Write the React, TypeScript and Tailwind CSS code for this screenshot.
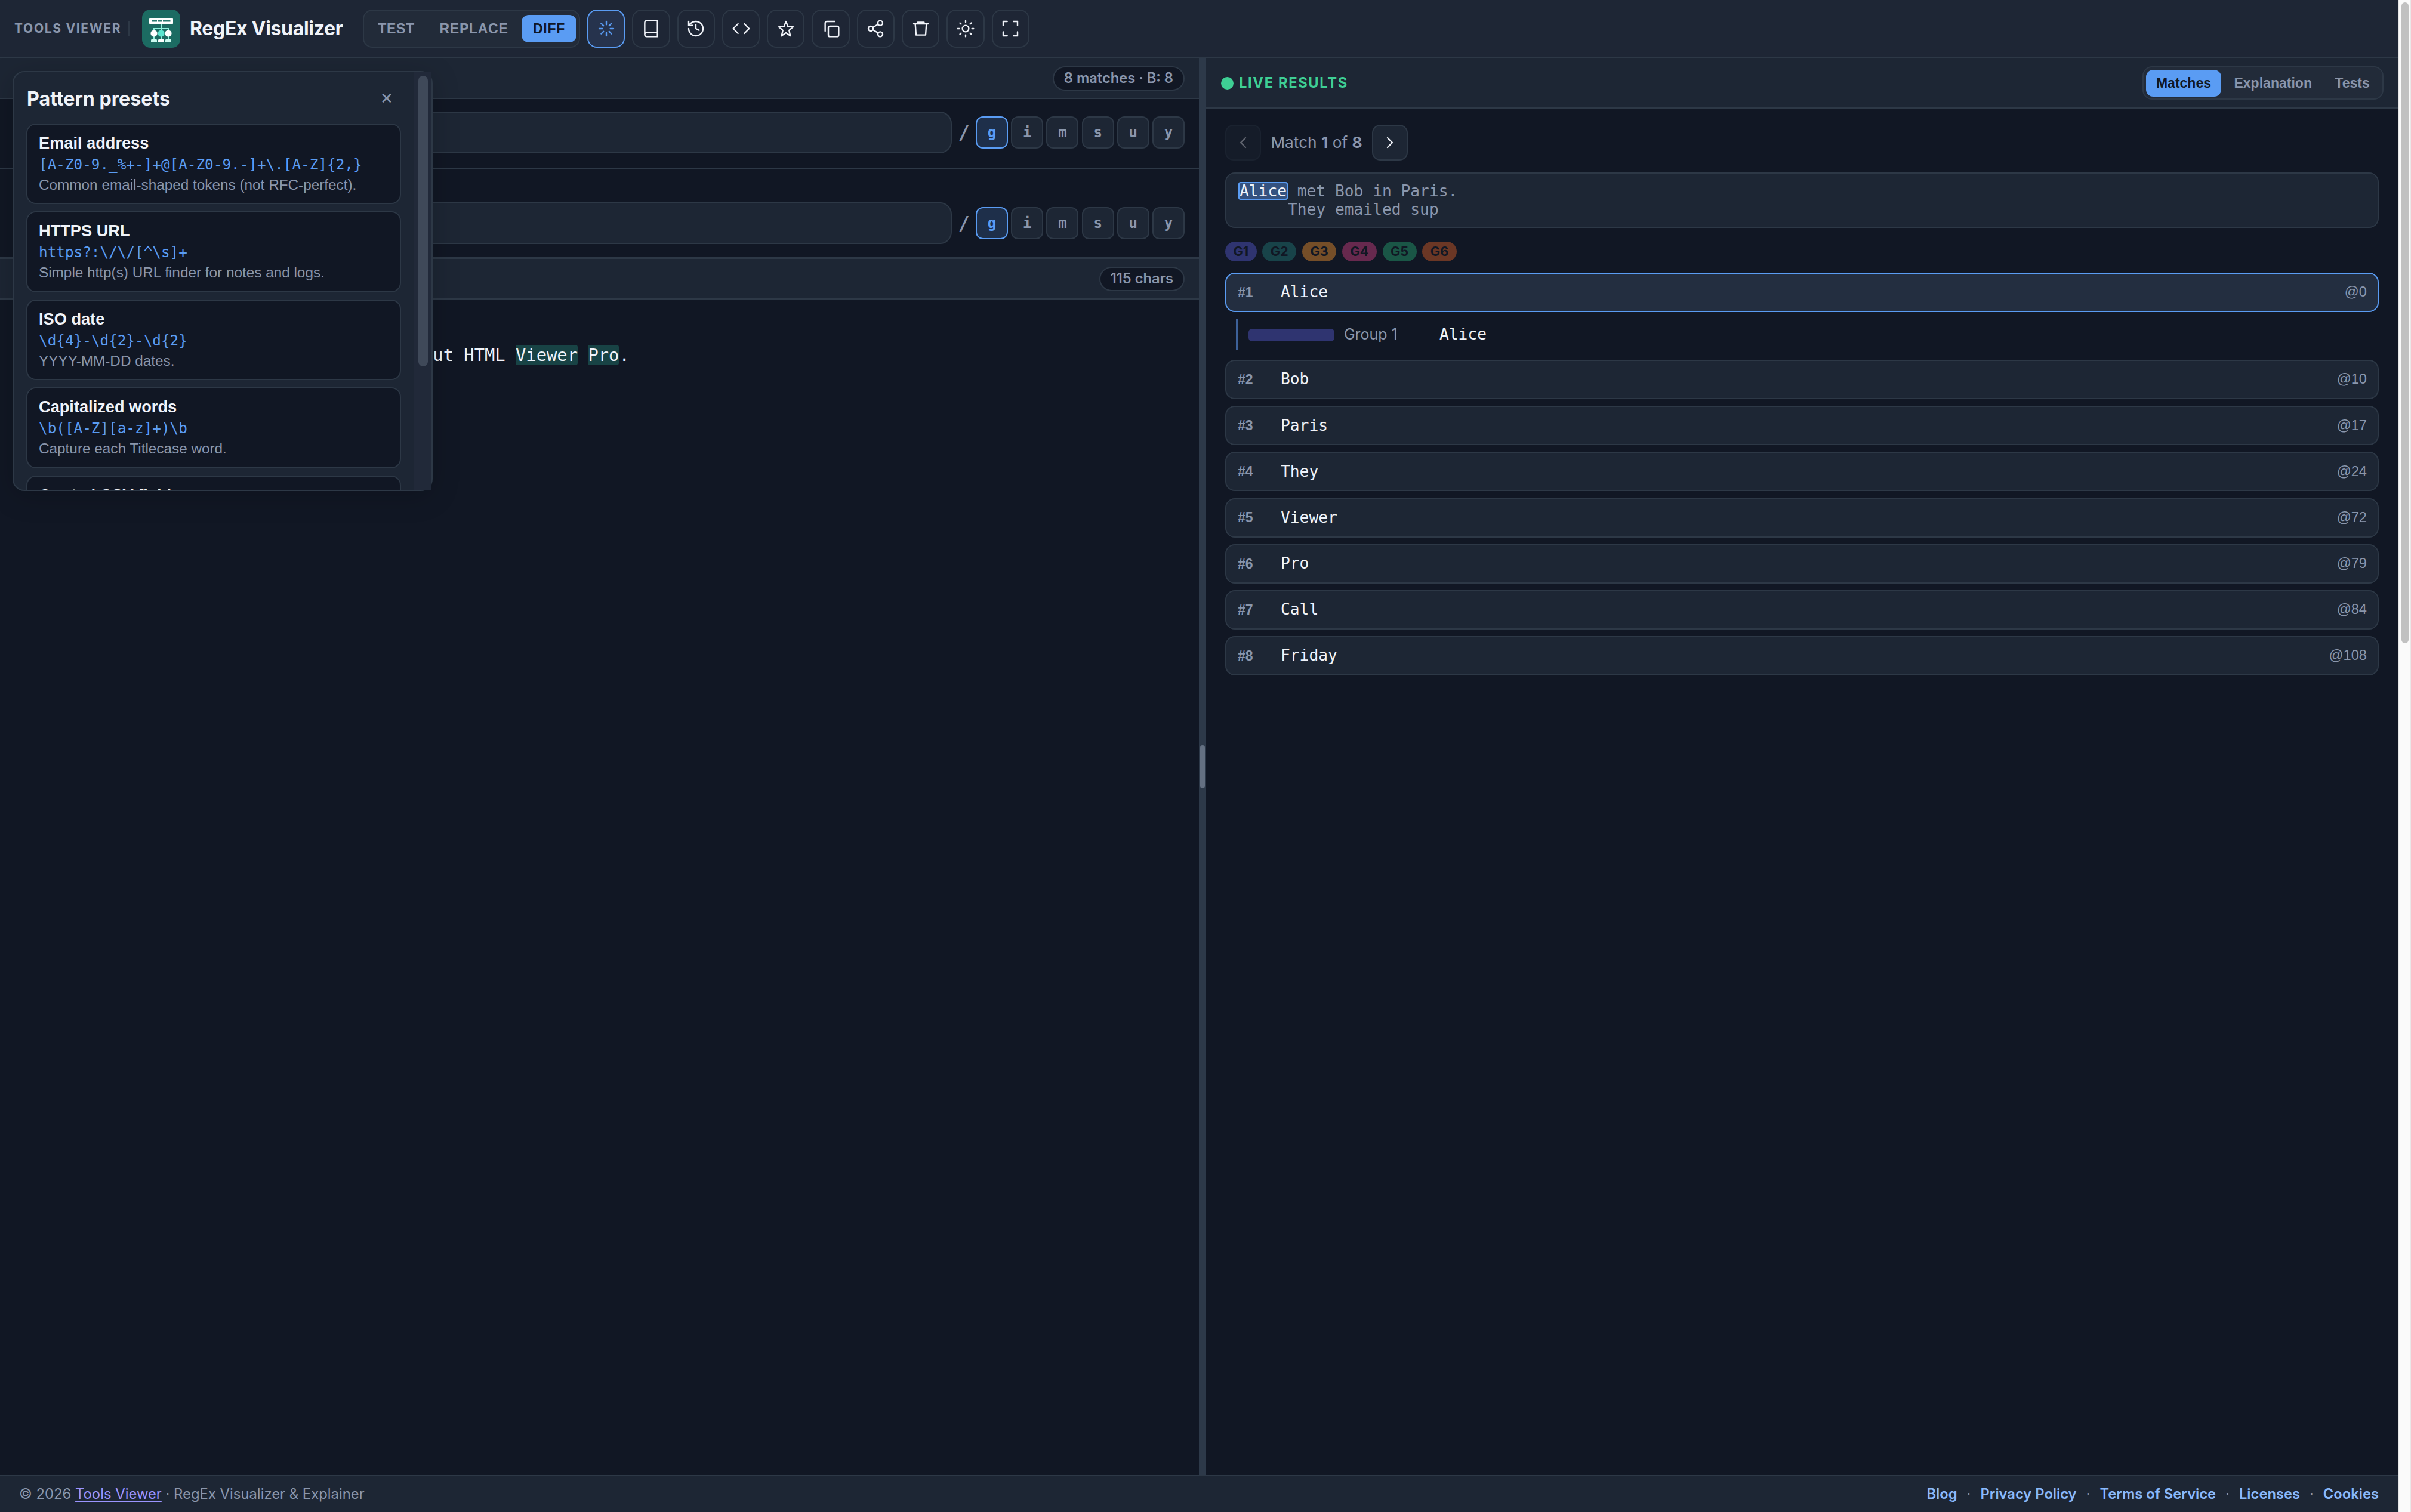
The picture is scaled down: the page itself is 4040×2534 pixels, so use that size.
import { useState } from 'react';
import type { ReactNode } from 'react';

const MODES = [
  ['TEST', 'w-[100px]'],
  ['REPLACE', 'w-[154px]'],
  ['DIFF', 'w-[92px]'],
];

const FLAGS = ['g', 'i', 'm', 's', 'u', 'y'];

const PRESETS = [
  ['Email address', '[A-Z0-9._%+-]+@[A-Z0-9.-]+\\.[A-Z]{2,}', 'Common email-shaped tokens (not RFC-perfect).'],
  ['HTTPS URL', 'https?:\\/\\/[^\\s]+', 'Simple http(s) URL finder for notes and logs.'],
  ['ISO date', '\\d{4}-\\d{2}-\\d{2}', 'YYYY-MM-DD dates.'],
  ['Capitalized words', '\\b([A-Z][a-z]+)\\b', 'Capture each Titlecase word.'],
  ['Quoted CSV field', '', ''],
];

const GROUPS = [
  ['G1', 'bg-[#2f3470]'],
  ['G2', 'bg-[#184349]'],
  ['G3', 'bg-[#754e28]'],
  ['G4', 'bg-[#67294e]'],
  ['G5', 'bg-[#1a5646]'],
  ['G6', 'bg-[#6b3725]'],
];

const MATCHES = [
  { text: 'Alice', at: 0 },
  { text: 'Bob', at: 10 },
  { text: 'Paris', at: 17 },
  { text: 'They', at: 24 },
  { text: 'Viewer', at: 72 },
  { text: 'Pro', at: 79 },
  { text: 'Call', at: 84 },
  { text: 'Friday', at: 108 },
];

const LINKS = ['Blog', 'Privacy Policy', 'Terms of Service', 'Licenses', 'Cookies'];

function Icon({ children }: { children: ReactNode }) {
  return (
    <svg className="w-8 h-8" viewBox="0 0 24 24" fill="none" stroke="currentColor" strokeWidth="1.8" strokeLinecap="round" strokeLinejoin="round">
      {children}
    </svg>
  );
}

const TOOLS: [string, ReactNode][] = [
  ['Presets', <path d="M12 3v4M12 17v4M3 12h4M17 12h4M5.6 5.6l2.8 2.8M15.6 15.6l2.8 2.8M5.6 18.4l2.8-2.8M15.6 8.4l2.8-2.8" />],
  ['Cheatsheet', <path d="M4 19.5A2.5 2.5 0 0 1 6.5 17H20M6.5 2H20v20H6.5A2.5 2.5 0 0 1 4 19.5v-15A2.5 2.5 0 0 1 6.5 2z" />],
  ['History', <path d="M3 12a9 9 0 1 0 9-9 9.75 9.75 0 0 0-6.74 2.74L3 8M3 3v5h5M12 7v5l4 2" />],
  ['Code', <path d="M16 18l6-6-6-6M8 6l-6 6 6 6" />],
  ['Favorites', <path d="M12 3l2.4 6.3 6.5.5-5 4.3 1.6 7L12 17.3l-5.5 3.8 1.6-7-5-4.3 6.5-.5z" />],
  ['Copy', <><rect x="9" y="9" width="13" height="13" rx="2" /><path d="M5 15V5a2 2 0 0 1 2-2h10" /></>],
  ['Share', <><circle cx="18" cy="5" r="3" /><circle cx="6" cy="12" r="3" /><circle cx="18" cy="19" r="3" /><path d="M8.6 13.5l6.8 4M15.4 6.5l-6.8 4" /></>],
  ['Clear', <path d="M3 6h18M19 6l-1 14H6L5 6M8 6V4h8v2" />],
  ['Theme', <><circle cx="12" cy="12" r="4" /><path d="M12 2v2M12 20v2M4.9 4.9l1.4 1.4M17.7 17.7l1.4 1.4M2 12h2M20 12h2M6.3 17.7l-1.4 1.4M19.1 4.9l-1.4 1.4" /></>],
  ['Fullscreen', <path d="M8 3H3v5M16 3h5v5M3 16v5h5M21 16v5h-5" />],
];

function Logo() {
  return (
    <svg className="w-16 h-16 ml-[21px]" viewBox="0 0 64 64">
      <rect width="64" height="64" rx="14" fill="#1c6b62" />
      <rect x="12" y="14" width="40" height="11" rx="2.5" fill="#fff" />
      <path d="M17 19.2h8M27 19.2h6M35 19.2h12.5" stroke="#2a7a70" strokeWidth="2.4" />
      <path d="M32 25v10M20 36v-4h24v4M20 44v7M32 44v7M44 44v7" stroke="#8ff0dc" strokeWidth="2" fill="none" />
      <circle cx="20" cy="40" r="5.6" fill="#fff" />
      <circle cx="32" cy="40" r="5.6" fill="#5ce5cf" />
      <circle cx="44" cy="40" r="5.6" fill="#fff" />
      <rect x="15" y="50" width="10" height="5" rx="1.4" fill="#ccfbf1" />
      <rect x="27" y="50" width="10" height="5" rx="1.4" fill="#fff" />
      <rect x="39" y="50" width="10" height="5" rx="1.4" fill="#ccfbf1" />
    </svg>
  );
}

function Header() {
  const [mode, setMode] = useState('DIFF');
  return (
    <header className="relative z-20 h-[98px] shrink-0 flex items-center pl-6 bg-[#1e2635] border-b-2 border-[#2d3846]">
      <span className="w-[191px] text-[21px] font-bold tracking-[0.08em] text-[#8a96ac] whitespace-nowrap">TOOLS VIEWER</span>
      <span className="w-0.5 h-[26px] bg-[#2d3846]"></span>
      <Logo />
      <h1 className="ml-[16px] w-[290px] text-[32px] font-bold tracking-[-0.01em] text-[#f0f3f9] whitespace-nowrap">RegEx Visualizer</h1>
      <div className="h-16 flex items-center gap-[3px] px-1 bg-[#222b39] border-2 border-[#2d3846] rounded-[16px]">
        {MODES.map(([label, width]) => (
          <button
            key={label}
            onClick={() => setMode(label)}
            className={"h-[46px] font-['Liberation_Sans',sans-serif] text-[23.04px] font-bold tracking-[0.03em] rounded-[12px] " + width + (mode === label ? ' bg-[#5a9cf3] text-[#111724]' : ' text-[#8a96ac]')}
          >
            {label}
          </button>
        ))}
      </div>
      <div className="ml-3 flex gap-3">
        {TOOLS.map(([name, icon], i) => (
          <button
            key={name}
            title={name}
            className={'w-[63.3px] h-16 flex items-center justify-center border-2 rounded-[16px] ' + (i === 0 ? 'bg-[#26334d] border-[#5a9cf3] text-[#5a9cf3]' : 'border-[#2d3846] text-[#f0f3f9]')}
          >
            <Icon>{icon}</Icon>
          </button>
        ))}
      </div>
    </header>
  );
}

function Badge({ children }: { children: ReactNode }) {
  return (
    <span className="h-[41px] flex items-center px-[17px] bg-[#111724] border-2 border-[#2d3846] rounded-full text-[23.68px] font-semibold text-[#8a96ac] whitespace-nowrap">
      {children}
    </span>
  );
}

function PatternRow() {
  return (
    <div className="flex items-center font-['DejaVu_Sans_Mono',monospace]">
      <div className="ml-8 flex-1 h-[70px] bg-[#1d2634] border-2 border-[#2d3846] rounded-[20px]"></div>
      <span className="w-10 text-center text-[32px] leading-[54px] font-bold text-[#8a96ac]">/</span>
      <div className="flex gap-[5.2px]">
        {FLAGS.map((flag) => (
          <button
            key={flag}
            className={'w-[54px] h-[54px] border-2 rounded-[12px] text-[24px] font-bold ' + (flag === 'g' ? 'bg-[#1e2f4a] border-[#5a9cf3] text-[#5a9cf3]' : 'bg-[#1d2634] border-[#2d3846] text-[#8a96ac]')}
          >
            {flag}
          </button>
        ))}
      </div>
    </div>
  );
}

function Hit({ children }: { children: ReactNode }) {
  return <mark className="bg-[#184345] text-[#f0f3f9] rounded-[4px]">{children}</mark>;
}

function Editor() {
  return (
    <section className="w-[2009px] flex flex-col">
      <div className="h-[68px] flex items-center justify-end px-6 bg-[#1d2634] border-b-2 border-[#2d3846]">
        <Badge>8 matches · B: 8</Badge>
      </div>
      <div className="h-[117px] px-6 pt-[21px] border-b-2 border-[#2d3846]">
        <PatternRow />
      </div>
      <div className="h-[151px] px-6 pt-[56px] border-b-4 border-[#2d3846]">
        <PatternRow />
      </div>
      <div className="h-[68px] flex items-center justify-end px-6 bg-[#1d2634] border-b-2 border-[#2d3846]">
        <Badge>115 chars</Badge>
      </div>
      <div className="flex-1 pl-[725.3px] pt-[70px] font-['DejaVu_Sans_Mono',monospace] text-[28.8px] leading-[46px] text-[#f0f3f9] whitespace-pre">
        <div>ut HTML <Hit>Viewer</Hit> <Hit>Pro</Hit>.</div>
      </div>
    </section>
  );
}

function Results() {
  return (
    <section className="flex-1 flex flex-col">
      <div className="h-[84px] flex items-center justify-between px-6 bg-[#1d2634] border-b-2 border-[#2d3846]">
        <div className="ml-px flex items-center gap-[9px] text-[23.68px] font-bold tracking-[0.07em] text-[#3ecf94]">
          <span className="w-[21px] h-[21px] rounded-full bg-[#3ecf94]"></span>
          LIVE RESULTS
        </div>
        <div className="h-14 flex items-center gap-1 px-1 bg-[#222b39] border-2 border-[#2d3846] rounded-[16px] font-['Liberation_Sans',sans-serif] text-[23.04px] font-bold text-[#8a96ac]">
          <button className="h-[45px] px-[17.2px] rounded-[12px] bg-[#5a9cf3] text-[#111724]">Matches</button>
          <button className="h-[45px] px-[17.2px]">Explanation</button>
          <button className="h-[45px] px-[17.2px]">Tests</button>
        </div>
      </div>
      <div className="px-8 pt-[27px]">
        <div className="flex items-center">
          <button className="w-[60px] h-[60px] flex items-center justify-center bg-[#1d2634] border-2 border-[#2d3846] rounded-[14px] text-[#f0f3f9] opacity-35">
            <Icon><path d="M15 6l-6 6 6 6" /></Icon>
          </button>
          <span className="w-[186px] text-center text-[26.24px] text-[#8a96ac]">Match <b>1</b> of <b>8</b></span>
          <button className="w-[60px] h-[60px] flex items-center justify-center bg-[#1d2634] border-2 border-[#2d3846] rounded-[14px] text-[#f0f3f9]">
            <Icon><path d="M9 6l6 6-6 6" /></Icon>
          </button>
        </div>
        <div className="mt-5 h-[93px] px-5 py-3.5 bg-[#1d2634] border-2 border-[#2d3846] rounded-[16px] font-['DejaVu_Sans_Mono',monospace] text-[26.24px] leading-[30.5px] text-[#8a96ac]">
          <div className="whitespace-pre"><mark className="px-0.5 bg-[#345280] text-[#f0f3f9] rounded-[4px] inset-ring-2 inset-ring-[#5a9cf3]">Alice</mark> met Bob in Paris.</div>
          <div className="pl-[83px]">They emailed sup</div>
        </div>
        <div className="mt-[23px] flex gap-[9.6px]">
          {GROUPS.map(([name, color]) => (
            <span key={name} className={'h-[33px] px-[13.5px] flex items-center rounded-full text-[21.76px] font-bold text-[#111724] ' + color}>{name}</span>
          ))}
        </div>
        <div className="mt-[19px] flex flex-col gap-[11.17px]">
          {MATCHES.map((m, i) => (
            <div key={m.at}>
              <button className={'w-full h-[66px] flex items-center px-[18px] border-2 rounded-[16px] text-left ' + (i === 0 ? 'bg-[#232e40] border-[#5a9cf3]' : 'bg-[#1d2634] border-[#2d3846]')}>
                <span className="w-[73px] pl-px font-['Liberation_Sans',sans-serif] text-[23.04px] font-bold text-[#8a96ac]">#{i + 1}</span>
                <span className="flex-1 font-['DejaVu_Sans_Mono',monospace] text-[26.24px] text-[#f0f3f9]">{m.text}</span>
                <span className="font-['Liberation_Sans',sans-serif] text-[23.68px] text-[#8a96ac]">@{m.at}</span>
              </button>
              {i === 0 && (
                <div className="mt-3 mb-[5px] ml-[18px] h-[52px] pl-[17px] flex items-center gap-4 border-l-4 border-[#3d6199]">
                  <span className="w-36 h-[21px] rounded-[6px] bg-[#2f3470]"></span>
                  <span className="w-36 text-[24.96px] text-[#8a96ac]">Group 1</span>
                  <span className="font-['DejaVu_Sans_Mono',monospace] text-[26.24px] text-[#f0f3f9]">{m.text}</span>
                </div>
              )}
            </div>
          ))}
        </div>
      </div>
    </section>
  );
}

function PresetsPanel() {
  return (
    <div className="absolute left-[21px] top-[119px] z-10 w-[704px] h-[704px] bg-[#1d2634] border-2 border-[#2d3846] rounded-[20px] shadow-[0_8px_48px_rgba(0,0,0,0.18)]">
      <div className="flex h-full overflow-hidden">
        <div className="w-[670px] px-[21px] pt-[22px]">
          <div className="h-16 flex items-start justify-between pl-px">
            <h2 className="text-[32.2px] leading-[45px] font-bold text-[#f0f3f9]">Pattern presets</h2>
            <button className="w-12 h-[44px] font-['DejaVu_Sans',sans-serif] text-[26px] font-bold text-[#8a96ac]">✕</button>
          </div>
          <div className="flex flex-col gap-3">
            {PRESETS.map(([name, pattern, hint]) => (
              <button key={name} className="h-[135.4px] shrink-0 px-[19px] pt-[15px] flex flex-col text-left bg-[#111724] border-2 border-[#2d3846] rounded-[16px] font-['Liberation_Sans',sans-serif]">
                <span className="text-[27.2px] leading-[32px] font-bold text-[#f0f3f9]">{name}</span>
                {pattern && <span className="font-['DejaVu_Sans_Mono',monospace] text-[24.32px] leading-[39px] text-[#5a9cf3]">{pattern}</span>}
                {hint && <span className="text-[24.32px] leading-[30px] text-[#8a96ac] whitespace-nowrap">{hint}</span>}
              </button>
            ))}
          </div>
        </div>
        <div className="w-[30px] pl-2 pt-1.5 bg-[#212939]">
          <div className="w-4 h-[487px] rounded-full bg-[#3f4959]"></div>
        </div>
      </div>
    </div>
  );
}

export default function App() {
  return (
    <div className="w-[4040px] h-[2534px] flex overflow-hidden bg-[#111724] font-['Inter',sans-serif]">
      <div className="relative w-[4018px] flex flex-col">
        <Header />
        <main className="flex-1 flex">
          <Editor />
          <div className="w-3 flex items-center justify-center bg-[#2d3949]">
            <div className="w-2 h-[72px] rounded-full bg-[#647082]"></div>
          </div>
          <Results />
        </main>
        <footer className="h-[62px] shrink-0 flex items-center justify-between px-8 bg-[#1d2634] border-t-2 border-[#2d3846] text-[23.84px] text-[#8a96ac]">
          <div>
            © 2026 <a href="#" className="text-[#9b94ff] underline decoration-2 underline-offset-4">Tools Viewer</a> · RegEx Visualizer &amp; Explainer
          </div>
          <nav className="flex gap-4">
            {LINKS.map((link, i) => (
              <span key={link} className="flex gap-4 text-[23.72px]">
                {i > 0 && <span>·</span>}
                <a href="#" className="font-semibold text-[#8ab9fb]">{link}</a>
              </span>
            ))}
          </nav>
        </footer>
        <PresetsPanel />
      </div>
      <div className="w-[22px] pl-1 pt-1 bg-[#fafafa] border-x-2 border-[#e8e8e8]">
        <div className="w-3 h-[1074px] rounded-full bg-[#c1c1c1]"></div>
      </div>
    </div>
  );
}
